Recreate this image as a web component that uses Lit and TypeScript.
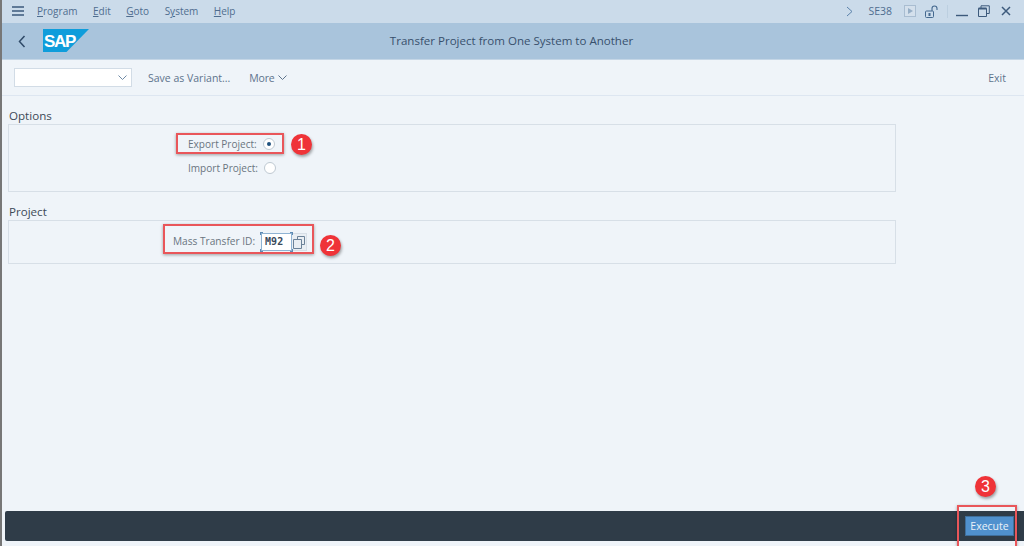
import { LitElement, html, css } from "lit";
import { customElement } from "lit/decorators.js";

@customElement("app-root")
export class AppRoot extends LitElement {
  static styles = css`
    :host { display: block; width: 1024px; height: 546px; position: relative; overflow: hidden; font-family: "Open Sans", "Noto Sans", sans-serif; background: #eff4f9; color: #5d738c; box-sizing: border-box; border-left: 2px solid #777; }
    * { box-sizing: border-box; }
    .page { display: flex; flex-direction: column; height: 546px; }
    .menu { height: 23px; flex: none; display: flex; align-items: center; background: #cbdbea; font-size: 10px; color: #4f6d8f; padding: 0 0 1px 10px; }
    .burger { width: 13px; height: 10px; margin-right: 12px; }
    .menu-items { display: flex; gap: 15.5px; }
    .menu-items u { text-decoration: underline; text-underline-offset: 1px; text-decoration-thickness: 1px; }
    .menu-right { margin-left: auto; display: flex; align-items: center; }
    .tcode { font-size: 10.5px; margin: 0 12px 0 15px; }
    .sep { width: 1px; height: 13px; background: #bccfe0; margin: 0 8px 0 9px; }
    .title { height: 36px; flex: none; display: flex; align-items: center; background: #a9c4dc; position: relative; padding-left: 16px; }
    .logo { margin-left: 17px; margin-top: -1px; display: block; }
    .title-text { position: absolute; left: 0; right: 0; text-align: center; font-size: 11.55px; color: #38506c; padding: 0 3px 2px 0; }
    .toolbar { height: 37px; flex: none; display: flex; align-items: center; background: #eff4f9; border-top: 1px solid #c4d6e6; border-bottom: 1px solid #dde6f1; padding: 0 18px 0 12px; font-size: 10.5px; color: #5d738c; }
    .select { width: 118px; height: 19px; background: #fff; border: 1px solid #d2dce6; display: flex; align-items: center; justify-content: flex-end; padding-right: 4px; margin-right: 16px; }
    .more { margin-left: 19px; display: flex; align-items: center; gap: 3px; letter-spacing: -0.2px; }
    .exit { margin-left: auto; }
    .content { flex: 1; padding: 13px 128px 0 6px; }
    .section-title { font-size: 11.6px; line-height: 13px; color: #3d4a57; padding-left: 1px; }
    .box { border: 1px solid #d7dfe7; margin-top: 2px; position: relative; }
    .options { height: 68px; margin-bottom: 13px; padding-top: 12px; }
    .project { height: 44px; padding-top: 11px; }
    .row { display: flex; align-items: center; height: 14px; font-size: 10.05px; color: #6a7580; }
    .row + .row { margin-top: 10px; }
    .row.r-opt { padding-left: 179px; }
    .row.r-proj { padding-left: 164px; height: 20px; font-size: 10.15px; }
    .r-proj .lbl { padding-bottom: 2px; }
    .radio { width: 12px; height: 12px; border-radius: 50%; border: 1px solid #bfc9d2; background: #fff; margin-left: 6px; display: flex; align-items: center; justify-content: center; }
    .radio i { width: 4px; height: 4px; border-radius: 50%; background: #20527f; }
    .field { position: relative; width: 31px; height: 18px; margin-left: 6px; background: #fff; border: 1px solid #8fb3d3; font-family: "DejaVu Sans Mono", monospace; font-size: 10px; font-weight: 700; color: #3a4a5c; padding-left: 3px; line-height: 15px; }
    .h { position: absolute; width: 3px; height: 3px; border: 1px solid #5d8ab3; }
    .h.a { left: -2px; top: -2px; border-right: 0; border-bottom: 0; }
    .h.b { right: -2px; top: -2px; border-left: 0; border-bottom: 0; }
    .h.c { left: -2px; bottom: -2px; border-right: 0; border-top: 0; }
    .h.d { right: -2px; bottom: -2px; border-left: 0; border-top: 0; }
    .help { width: 15px; height: 18px; background: #e9eef3; border: 1px solid #d7dfe7; border-left: 0; display: flex; align-items: center; justify-content: center; }
    .footer { flex: none; height: 30px; margin: 0 0 5px 3px; background: #2f3c48; border-radius: 2px 0 0 2px; display: flex; align-items: center; justify-content: flex-end; padding-right: 10px; }
    .exec { width: 49px; height: 20px; background: #5091ce; border: 1px solid #3f6f9c; color: #eaf2f9; font-size: 10.5px; text-align: center; line-height: 18px; }
    .mark { position: absolute; border: 2px solid #e9565a; box-shadow: 0 1px 3px rgba(0, 0, 0, 0.35); }
    .m1 { left: 174px; top: 133px; width: 108px; height: 21px; }
    .m2 { left: 161px; top: 224px; width: 151px; height: 30px; }
    .m3 { left: 955px; top: 505px; width: 60px; height: 42px; border-bottom: 0; }
    .badge { position: absolute; width: 21px; height: 21px; border-radius: 50%; background: #ef3338; color: #fff; font-family: "Liberation Sans", sans-serif; font-size: 16px; line-height: 21px; text-align: center; box-shadow: 1px 2px 3px rgba(0, 0, 0, 0.35); }
    .b1 { left: 289px; top: 134px; }
    .b2 { left: 318px; top: 235px; }
    .b3 { left: 973px; top: 476px; }
  `;

  render() {
    return html`
      <div class="page">
        <div class="menu">
          <svg class="burger" viewBox="0 0 13 10"><path d="M0 1h12M0 5h12M0 9h12" stroke="#3d5a7c" stroke-width="1.4" fill="none"/></svg>
          <div class="menu-items">
            <span><u>P</u>rogram</span><span><u>E</u>dit</span><span><u>G</u>oto</span><span>S<u>y</u>stem</span><span><u>H</u>elp</span>
          </div>
          <div class="menu-right">
            <svg width="7" height="11" viewBox="0 0 7 11"><path d="M1 1l5 4.5L1 10" stroke="#5b82aa" fill="none"/></svg>
            <span class="tcode">SE38</span>
            <svg width="12" height="12" viewBox="0 0 12 12"><rect x=".5" y=".5" width="11" height="11" fill="#d4e0ec" stroke="#a9bdd1"/><path d="M4 3l5 3-5 3z" fill="#96aec6"/></svg>
            <svg style="margin-left:9px" width="13" height="13" viewBox="0 0 13 13"><path d="M7 6V3.5a2.5 2.5 0 0 1 5 0V5" stroke="#45698f" stroke-width="1.1" fill="none"/><rect x=".5" y="6" width="8" height="6.5" rx="1" fill="none" stroke="#45698f"/><rect x="3.5" y="8" width="2" height="3" fill="#45698f"/></svg>
            <span class="sep"></span>
            <svg width="12" height="12" viewBox="0 0 12 12"><path d="M0 10.5h12" stroke="#3d5a7c" stroke-width="1.4"/></svg>
            <svg style="margin-left:10px" width="12" height="12" viewBox="0 0 12 12"><path d="M.5 3.5h8v8h-8zM3 3V.8h8.3v7.7H9" stroke="#3d5a7c" fill="none"/><path d="M.5 3.5h8" stroke="#3d5a7c" stroke-width="2"/></svg>
            <svg style="margin:0 13px 0 11px" width="10" height="10" viewBox="0 0 10 10"><path d="M1 1l8 8M9 1l-8 8" stroke="#3d5a7c" stroke-width="1.5"/></svg>
          </div>
        </div>
        <div class="title">
          <svg width="8" height="13" viewBox="0 0 8 13"><path d="M6.5 1L1.5 6.5l5 5.5" stroke="#2f4a68" stroke-width="1.5" fill="none"/></svg>
          <svg class="logo" width="46" height="23" viewBox="0 0 46 23"><path d="M0 0h46L23.5 23H0z" fill="#0f9ddb"/><text x="1" y="18" font-family="Liberation Sans" font-weight="700" font-size="17" letter-spacing="-1.3" fill="#fff">SAP</text></svg>
          <span class="title-text">Transfer Project from One System to Another</span>
        </div>
        <div class="toolbar">
          <div class="select"><svg width="9" height="6" viewBox="0 0 9 6"><path d="M.5.5l4 4 4-4" stroke="#6f8aa6" fill="none"/></svg></div>
          <span>Save as Variant...</span>
          <span class="more">More <svg width="9" height="6" viewBox="0 0 9 6"><path d="M.5.5l4 4 4-4" stroke="#5d738c" fill="none"/></svg></span>
          <span class="exit">Exit</span>
        </div>
        <div class="content">
          <div class="section-title">Options</div>
          <div class="box options">
            <div class="row r-opt"><span>Export Project:</span><span class="radio"><i></i></span></div>
            <div class="row r-opt"><span>Import Project:</span><span class="radio"></span></div>
          </div>
          <div class="section-title">Project</div>
          <div class="box project">
            <div class="row r-proj"><span class="lbl">Mass Transfer ID:</span>
              <div class="field">M92<i class="h a"></i><i class="h b"></i><i class="h c"></i><i class="h d"></i></div>
              <div class="help"><svg width="12" height="13" viewBox="0 0 12 13"><path d="M4.5 3V.5h7v8H9M.5 3.5h8v9h-8z" stroke="#6b8299" fill="none"/></svg></div>
            </div>
          </div>
        </div>
        <div class="footer"><div class="exec">Execute</div></div>
      </div>
      <div class="mark m1"></div><div class="mark m2"></div><div class="mark m3"></div>
      <div class="badge b1">1</div><div class="badge b2">2</div><div class="badge b3">3</div>
    `;
  }
}
